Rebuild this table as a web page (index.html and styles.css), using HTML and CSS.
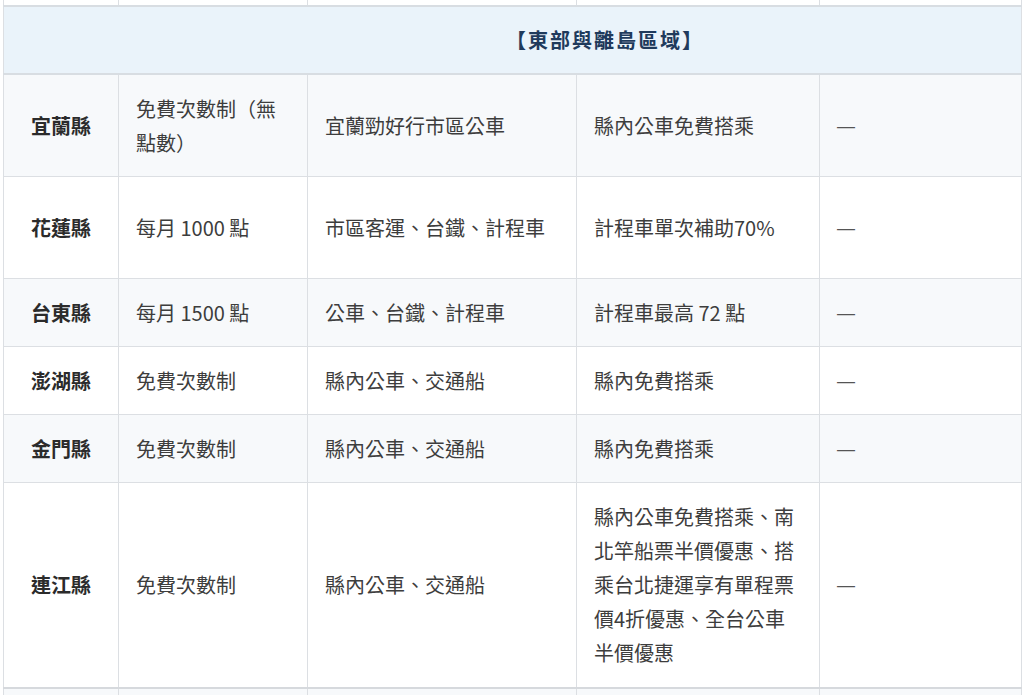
FILE: index.html
```html
<!DOCTYPE html>
<html lang="zh-Hant">
<head>
<meta charset="utf-8">
<title>東部與離島區域</title>
<link rel="stylesheet" href="styles.css">
</head>
<body>
<div class="wrap">
<table class="fare-table">
  <colgroup>
    <col class="c-county">
    <col class="c-type">
    <col class="c-mode">
    <col class="c-note">
    <col class="c-extra">
  </colgroup>
  <tbody>
    <tr class="prev-row"><td></td><td></td><td></td><td></td><td></td></tr>
    <tr class="region-row"><td colspan="5" class="region-title">【東部與離島區域】</td></tr>
    <tr class="stripe">
      <td class="county">宜蘭縣</td>
      <td>免費次數制（無點數）</td>
      <td>宜蘭勁好行市區公車</td>
      <td>縣內公車免費搭乘</td>
      <td class="dash">—</td>
    </tr>
    <tr class="tall">
      <td class="county">花蓮縣</td>
      <td>每月 1000 點</td>
      <td>市區客運、台鐵、計程車</td>
      <td>計程車單次補助70%</td>
      <td class="dash">—</td>
    </tr>
    <tr class="stripe">
      <td class="county">台東縣</td>
      <td>每月 1500 點</td>
      <td>公車、台鐵、計程車</td>
      <td>計程車最高 72 點</td>
      <td class="dash">—</td>
    </tr>
    <tr>
      <td class="county">澎湖縣</td>
      <td>免費次數制</td>
      <td>縣內公車、交通船</td>
      <td>縣內免費搭乘</td>
      <td class="dash">—</td>
    </tr>
    <tr class="stripe">
      <td class="county">金門縣</td>
      <td>免費次數制</td>
      <td>縣內公車、交通船</td>
      <td>縣內免費搭乘</td>
      <td class="dash">—</td>
    </tr>
    <tr class="last">
      <td class="county">連江縣</td>
      <td>免費次數制</td>
      <td>縣內公車、交通船</td>
      <td>縣內公車免費搭乘、南北竿船票半價優惠、搭乘台北捷運享有單程票價4折優惠、全台公車半價優惠</td>
      <td class="dash">—</td>
    </tr>
    <tr class="stripe next-row"><td></td><td></td><td></td><td></td><td></td></tr>
  </tbody>
</table>
</div>
</body>
</html>
```

FILE: styles.css
```css
html, body {
  margin: 0;
  padding: 0;
  background: #ffffff;
}

body {
  font-family: "Noto Sans CJK TC", "Noto Sans", sans-serif;
  color: #3d3d3d;
  overflow: hidden;
}

.wrap {
  padding: 0 3px;
}

.fare-table {
  width: 1018px;
  border-collapse: collapse;
  table-layout: fixed;
  font-size: 20px;
  line-height: 34px;
}

.c-county { width: 115px; }
.c-type { width: 189px; }
.c-mode { width: 269px; }
.c-note { width: 243px; }
.c-extra { width: 202px; }

.fare-table td {
  border: 1px solid #dcdfe3;
  padding: 16.5px 17px;
  vertical-align: middle;
  text-align: left;
}

.fare-table tr.stripe td {
  background: #f7f9fb;
}

.fare-table tr.prev-row td {
  height: 5px;
  padding: 0;
  border-top: none;
  background: #ffffff;
}

.fare-table tr.next-row td {
  height: 10px;
  padding: 0;
  border-top: 2px solid #d6d9dd;
}

.fare-table tr.region-row td {
  background: #eaf3fa;
  border-top: 2px solid #d8dde2;
  border-bottom: 2px solid #d8dde2;
}

.fare-table td.region-title {
  padding-left: 202px;
  padding-top: 16px;
  padding-bottom: 16px;
  text-align: center;
  color: #1f3a5c;
  font-weight: 700;
  letter-spacing: 2px;
}

.fare-table td.county {
  text-align: center;
  font-weight: 700;
  color: #2b2b2b;
  padding-left: 10px;
  padding-right: 10px;
}

.fare-table tr.tall td {
  height: 68px;
}

.fare-table tr.last td {
  padding-top: 17px;
  padding-bottom: 17px;
}

.fare-table td.dash {
  color: #555555;
  font-family: "Liberation Sans", sans-serif;
  font-size: 18px;
}
```
